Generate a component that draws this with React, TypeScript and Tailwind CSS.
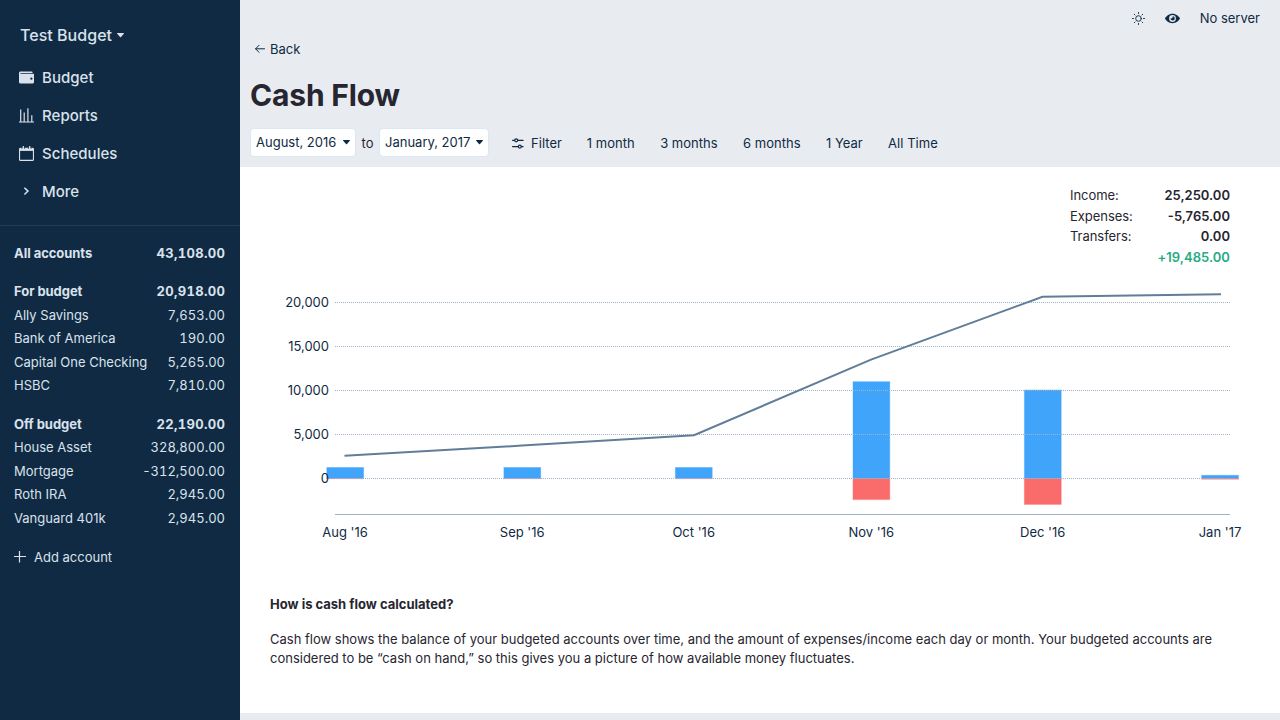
import React from 'react';

type Account = { name: string; value: string };

const forBudget: Account[] = [
  { name: 'Ally Savings', value: '7,653.00' },
  { name: 'Bank of America', value: '190.00' },
  { name: 'Capital One Checking', value: '5,265.00' },
  { name: 'HSBC', value: '7,810.00' },
];

const offBudget: Account[] = [
  { name: 'House Asset', value: '328,800.00' },
  { name: 'Mortgage', value: '-312,500.00' },
  { name: 'Roth IRA', value: '2,945.00' },
  { name: 'Vanguard 401k', value: '2,945.00' },
];

function WalletIcon() {
  return (
    <svg width="15" height="15" viewBox="0 0 20 20" fill="currentColor">
      <path d="M0 4c0-1.1.9-2 2-2h15a1 1 0 0 1 1 1v1H2v1h17a1 1 0 0 1 1 1v10a2 2 0 0 1-2 2H2a2 2 0 0 1-2-2V4zm16.5 9a1.5 1.5 0 1 0 0-3 1.5 1.5 0 0 0 0 3z" />
    </svg>
  );
}

function ReportsIcon() {
  return (
    <svg width="15" height="15" viewBox="0 0 15 15" fill="currentColor">
      <path d="M0 13.6h15v1H0zM1.1 1.5h1.2v12.3H1.1zM4.6 4.5h1.2v9.3H4.6zM8.3 .3h1.2v13.5H8.3zM12.2 7.2h1.2v6.6h-1.2z" />
    </svg>
  );
}

function CalendarIcon() {
  return (
    <svg width="15" height="15" viewBox="0 0 15 15" fill="none">
      <rect x=".55" y="2.2" width="13.9" height="12.2" rx="1" stroke="currentColor" strokeWidth="1.1" />
      <path d="M.5 2h14v2.9H.5z" fill="currentColor" />
      <path d="M4.3 .6v2.4M10.7 .6v2.4" stroke="currentColor" strokeWidth="1.3" strokeLinecap="round" />
      <path d="M2.9 1v2M5.6 1v2M9.4 1v2M12.1 1v2" stroke="#102a43" strokeWidth=".6" />
    </svg>
  );
}

function ChevronIcon() {
  return (
    <svg width="15" height="15" viewBox="0 0 15 15" fill="none">
      <path d="M5.4 3.7 9 7.1 5.4 10.5" stroke="currentColor" strokeWidth="1.5" />
    </svg>
  );
}

function Caret() {
  return (
    <svg width="7" height="7" viewBox="0 0 7 7" fill="currentColor">
      <path d="M.5 1.1h6c.5 0 .6.4.3.7L4 4.9c-.3.3-.7.3-1 0L.2 1.8c-.3-.3-.2-.7.3-.7z" />
    </svg>
  );
}

function NavItem({ icon, label }: { icon: React.ReactNode; label: string }) {
  return (
    <div className="flex h-[38px] items-center gap-2 pl-[19px] text-[15px] font-medium tracking-[0.03px]">
      {icon}
      <span>{label}</span>
    </div>
  );
}

function AccountRow({ name, value, bold = false }: Account & { bold?: boolean }) {
  return (
    <div className={bold ? 'flex h-[23.45px] items-start justify-between font-bold' : 'flex h-[23.45px] items-start justify-between'}>
      <span className={bold ? 'tracking-[-0.05px]' : ''}>{name}</span>
      <span className={bold ? '-mr-[0.3px] tracking-[0.33px] tabular-nums' : 'tabular-nums'}>{value}</span>
    </div>
  );
}

function Sidebar() {
  return (
    <aside className="flex h-full w-60 shrink-0 flex-col bg-[#102a43] text-[#d9e2ec]">
      <div className="flex h-[58px] items-center gap-[5px] pt-3 pl-5 text-base font-medium tracking-[0.03px]">
        <span>Test Budget</span>
        <Caret />
      </div>
      <nav className="flex flex-col">
        <NavItem icon={<WalletIcon />} label="Budget" />
        <NavItem icon={<ReportsIcon />} label="Reports" />
        <NavItem icon={<CalendarIcon />} label="Schedules" />
        <NavItem icon={<ChevronIcon />} label="More" />
      </nav>
      <div className="mt-[15px] border-t border-[#243b53] pr-[15px] pl-[14px]">
        <div className="pt-[18px]">
          <AccountRow name="All accounts" value="43,108.00" bold />
        </div>
        <div className="pt-[14.85px]">
          <AccountRow name="For budget" value="20,918.00" bold />
          {forBudget.map((a) => (
            <AccountRow key={a.name} {...a} />
          ))}
        </div>
        <div className="pt-[15.35px]">
          <AccountRow name="Off budget" value="22,190.00" bold />
          {offBudget.map((a) => (
            <AccountRow key={a.name} {...a} />
          ))}
        </div>
        <div className="mt-[15.8px] flex items-start gap-2">
          <svg className="mt-[3px]" width="12" height="12" viewBox="0 0 12 12" fill="none" stroke="currentColor" strokeWidth="1.2">
            <path d="M0 5.5h12M5.5 0v11.5" />
          </svg>
          <span>Add account</span>
        </div>
      </div>
    </aside>
  );
}

function MonthSelect({ label, className }: { label: string; className: string }) {
  return (
    <button className={className}>
      <span>{label}</span>
      <Caret />
    </button>
  );
}

const ticks = [
  { label: '20,000', y: 302.5 },
  { label: '15,000', y: 346.5 },
  { label: '10,000', y: 390.5 },
  { label: '5,000', y: 434.5 },
  { label: '0', y: 478.5 },
];

const months = [
  { label: "Aug '16", x: 345.1, top: 467.5, bottom: 478.5 },
  { label: "Sep '16", x: 522.2, top: 467.5, bottom: 478.5 },
  { label: "Oct '16", x: 693.7, top: 467.5, bottom: 478.5 },
  { label: "Nov '16", x: 871.3, top: 381.7, bottom: 499.5 },
  { label: "Dec '16", x: 1042.7, top: 390, bottom: 504.3 },
  { label: "Jan '17", x: 1220, top: 475.3, bottom: 479.1 },
];

function Chart() {
  return (
    <svg className="block w-full" height="280" viewBox="240 270 1040 280" fontSize="13" fill="#102a43">
      {months.map((m) => (
        <g key={m.label}>
          <rect x={m.x - 18.3} y={m.top} width="36.8" height={478.5 - m.top} fill="#40a4fa" stroke="#40a4fa" strokeOpacity=".4" />
          <rect x={m.x - 18.3} y="478.5" width="36.8" height={m.bottom - 478.5} fill="#fa6b6b" />
          <path d={`M${m.x - 18.3} 478.9V${m.bottom + 0.2}h36.8V478.9`} fill="none" stroke="#fa6b6b" strokeOpacity=".45" />
        </g>
      ))}
      {ticks.map((t) => (
        <g key={t.label}>
          <line x1="335" x2="1230" y1={t.y} y2={t.y} stroke="#9fb3c8" strokeDasharray="1 1" />
          <text x="329" y={t.y + 4.5} textAnchor="end">{t.label}</text>
        </g>
      ))}
      <line x1="335" x2="1230" y1="514.5" y2="514.5" stroke="#9fb3c8" />
      <polyline points="344.5,455.8 522,445.6 694,435.2 871,359.6 1042.5,296.8 1221,294.3" fill="none" stroke="#627d98" strokeWidth="2" />
      {months.map((m) => (
        <text key={m.label} x={m.x} y="537" textAnchor="middle">{m.label}</text>
      ))}
    </svg>
  );
}

function SummaryRow({ label, value }: { label: string; value: string }) {
  return (
    <div className="flex h-[20.6px] items-center justify-between">
      <span className="tracking-[-0.05px]">{label}</span>
      <span className="font-semibold">{value}</span>
    </div>
  );
}

export default function App() {
  return (
    <div className="flex h-[720px] w-[1280px] overflow-hidden bg-[#e8ecf0] font-['Inter',sans-serif] text-[13px] leading-[19px] text-[#272630]">
      <Sidebar />
      <main className="flex min-w-0 flex-1 flex-col">
        <div className="flex h-9 shrink-0 items-center justify-end pr-5 text-[#102a43]">
          <svg className="mr-5" width="13" height="13" viewBox="0 0 13 13" fill="none" stroke="currentColor" strokeWidth=".95" strokeLinecap="round">
            <circle cx="6.5" cy="6.5" r="2.8" />
            <path d="M6.5 .5v1M6.5 11.5v1M.5 6.5h1M11.5 6.5h1M2.3 2.3l.7.7M10 10l.7.7M2.3 10.7l.7-.7M10 3l.7-.7" />
          </svg>
          <svg className="mr-5" width="15" height="15" viewBox="0 0 15 15" fill="currentColor" fillRule="evenodd">
            <path d="M7.5 2.8C3.8 2.8 1.2 5.5.2 7c-.2.3-.2.7 0 1 1 1.5 3.6 4.2 7.3 4.2s6.3-2.7 7.3-4.2c.2-.3.2-.7 0-1-1-1.5-3.6-4.2-7.3-4.2zm0 1.3a3.4 3.4 0 1 1 0 6.8 3.4 3.4 0 0 1 0-6.8zm0 1.2c.4.5.3 1.3-.2 1.7-.5.4-1.2.4-1.7 0a2.1 2.1 0 1 0 1.9-1.7z" />
          </svg>
          <span>No server</span>
        </div>
        <div className="flex h-[26px] shrink-0 items-center gap-[5px] pl-[15px] text-[#102a43]">
          <svg width="10" height="10" viewBox="0 0 10 10" fill="none" stroke="currentColor" strokeWidth="1" strokeLinecap="round" strokeLinejoin="round">
            <path d="M9.5 4.8H.6M4 1.3.6 4.8 4 8.3" />
          </svg>
          <span>Back</span>
        </div>
        <h1 className="flex h-[66px] shrink-0 items-center pl-[10px] text-[30px] font-bold tracking-[-0.17px]">Cash Flow</h1>
        <div className="flex h-[39px] shrink-0 items-start pl-[10px] text-[#102a43]">
          <MonthSelect label="August, 2016" className="flex h-[29px] w-[106px] items-center justify-between rounded-[4px] border border-[#d9e8f3] bg-white pr-[5px] pb-px pl-[5px]" />
          <span className="w-[23px] pt-[6px] text-center text-[#272630]">to</span>
          <MonthSelect label="January, 2017" className="flex h-[29px] w-[110px] items-center justify-between rounded-[4px] border border-[#d9e8f3] bg-white pr-[5px] pb-px pl-[5px]" />
          <div className="flex h-[31px] items-center pl-[23px]">
            <svg className="mr-[7px]" width="12" height="12" viewBox="0 0 12 12" fill="none" stroke="currentColor" strokeWidth="1.25" strokeLinecap="round">
              <path d="M.6 2.3h1.8M6 2.3h5.1M.6 8.5h5.4M9.6 8.5h1.5" />
              <circle cx="4.2" cy="2.3" r="1.5" />
              <circle cx="7.8" cy="8.5" r="1.5" />
            </svg>
            <div className="flex gap-[25.3px] tracking-[0.03px]">
              <span className="-mr-[0.4px]">Filter</span>
              <span>1 month</span>
              <span>3 months</span>
              <span>6 months</span>
              <span>1 Year</span>
              <span>All Time</span>
            </div>
          </div>
        </div>
        <section className="flex h-[546px] shrink-0 flex-col bg-white">
          <div className="mr-[50px] ml-auto h-[103px] w-[160px] pt-[18.4px]">
            <SummaryRow label="Income:" value="25,250.00" />
            <SummaryRow label="Expenses:" value="-5,765.00" />
            <SummaryRow label="Transfers:" value="0.00" />
            <div className="flex h-[20.6px] items-center justify-end font-semibold tracking-[0.05px] text-[#27ab83]">+19,485.00</div>
          </div>
          <Chart />
          <div className="pt-[45px] pl-[30px]">
            <p className="font-bold">How is cash flow calculated?</p>
            <p className="mt-4 w-[960px]">
              Cash flow shows the balance of your budgeted accounts over time, and the amount of expenses/income each day or month. Your budgeted accounts are considered to be “cash on hand,” so this gives you a picture of how available money fluctuates.
            </p>
          </div>
        </section>
      </main>
    </div>
  );
}
